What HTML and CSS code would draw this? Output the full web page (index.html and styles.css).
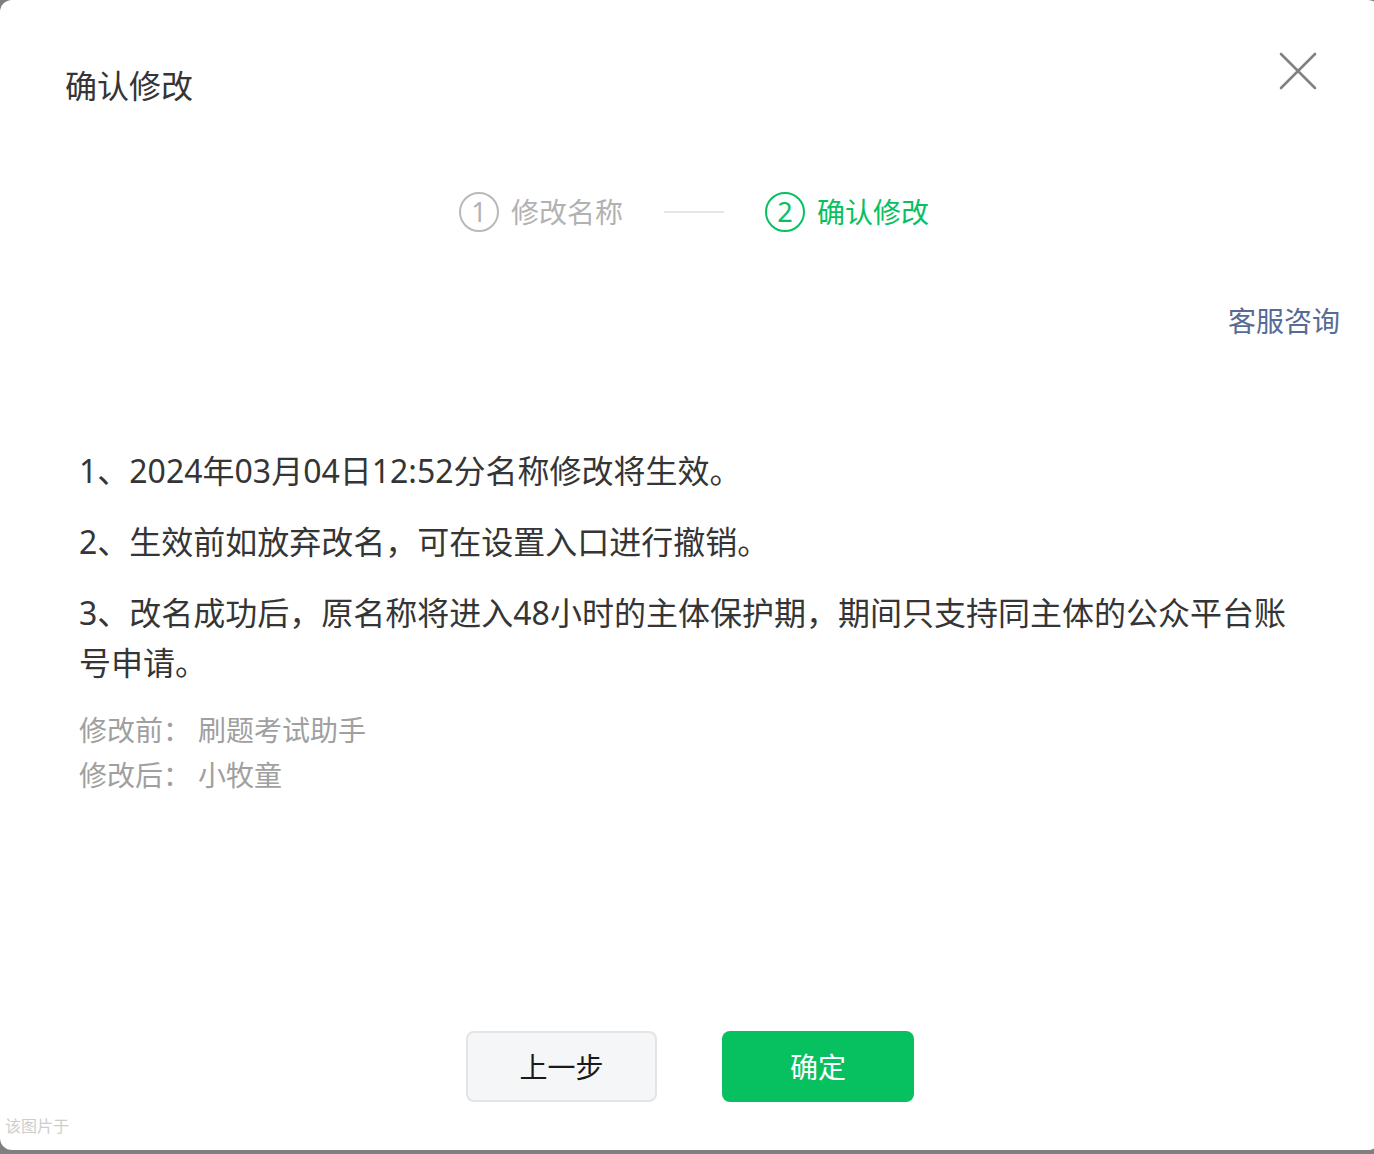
FILE: index.html
```html
<!DOCTYPE html>
<html lang="zh-CN">
<head>
	<meta charset="UTF-8">
	<title>确认修改</title>
	<link rel="stylesheet" href="styles.css">
</head>
<body>
<div class="dialog">
	<div class="hd">
		<h3 class="title">确认修改</h3>
		<a class="close" href="#">
			<svg width="40" height="40" viewBox="0 0 40 40">
				<path d="M3 3L37 37M37 3L3 37" stroke="#818181" stroke-width="2.6" stroke-linecap="round" fill="none"/>
			</svg>
		</a>
	</div>

	<div class="steps">
		<div class="step">
			<span class="num">1</span>
			<span class="name">修改名称</span>
		</div>
		<span class="line"></span>
		<div class="step current">
			<span class="num">2</span>
			<span class="name">确认修改</span>
		</div>
	</div>

	<div class="help"><a href="#">客服咨询</a></div>

	<div class="content">
		<p>1、2024年03月04日12:52分名称修改将生效。</p>
		<p>2、生效前如放弃改名，可在设置入口进行撤销。</p>
		<p>3、改名成功后，原名称将进入48小时的主体保护期，期间只支持同主体的公众平台账号申请。</p>
		<ul class="names">
			<li><span class="label">修改前：</span>刷题考试助手</li>
			<li><span class="label">修改后：</span>小牧童</li>
		</ul>
	</div>

	<div class="ft">
		<a class="btn btn-default" href="#">上一步</a>
		<a class="btn btn-primary" href="#">确定</a>
	</div>

	<span class="mark">该图片于</span>
</div>
</body>
</html>
```

FILE: styles.css
```css
* {
	margin: 0;
	padding: 0;
}

ul {
	list-style: none;
}

a {
	text-decoration: none;
}

html, body {
	height: 100%;
	overflow: hidden;
}

body {
	background: #7f7f7f;
	font-family: "Noto Sans", "Noto Sans CJK SC", sans-serif;
	color: #353535;
}

.dialog {
	width: 1380px;
	height: 1150px;
	background: #fff;
	border-radius: 12px;
	position: relative;
	display: flex;
	flex-direction: column;
}

/* header */
.hd {
	display: flex;
	justify-content: space-between;
	align-items: flex-start;
	padding: 64px 62px 0 65px;
}

.title {
	font-size: 32px;
	line-height: 44px;
	font-weight: normal;
	color: #353535;
}

.close {
	display: block;
	width: 40px;
	height: 40px;
	margin-top: -13px;
}

.close svg {
	display: block;
}

/* steps */
.steps {
	display: flex;
	justify-content: center;
	align-items: center;
	margin-top: 84px;
	padding-left: 8px;
	height: 40px;
}

.step {
	display: flex;
	align-items: center;
	color: #b2b2b2;
}

.step .num {
	width: 36px;
	height: 36px;
	border: 2px solid #b9b9b9;
	border-radius: 50%;
	font-size: 27px;
	line-height: 36px;
	text-align: center;
}

.step .name {
	font-size: 28px;
	line-height: 40px;
	margin-left: 12px;
}

.step.current {
	color: #07c160;
}

.step.current .num {
	border-color: #07c160;
}

.steps .line {
	width: 60px;
	height: 2px;
	background: #e6e6e6;
	margin: 0 41px;
}

/* help link */
.help {
	margin-top: 69px;
	padding-right: 40px;
	text-align: right;
	font-size: 28px;
	line-height: 40px;
}

.help a {
	color: #576b95;
}

/* content */
.content {
	margin-top: 105px;
	padding: 0 80px 0 79px;
}

.content p {
	font-size: 32px;
	line-height: 50px;
	margin-bottom: 21px;
}

.names {
	margin-top: -1px;
	font-size: 28px;
	line-height: 45px;
	color: #a0a0a0;
}

.names .label {
	margin-right: 7px;
}

/* footer */
.ft {
	margin-top: auto;
	padding: 0 0 48px;
	display: flex;
	justify-content: center;
	gap: 65px;
}

.btn {
	display: block;
	width: 192px;
	height: 71px;
	line-height: 72px;
	border-radius: 8px;
	font-size: 28px;
	text-align: center;
	box-sizing: border-box;
}

.btn-default {
	width: 191px;
	background: #f5f6f7;
	border: 2px solid #e3e4e6;
	line-height: 68px;
	color: #191919;
}

.btn-primary {
	background: #07c160;
	color: #fff;
}

.mark {
	position: absolute;
	left: 5px;
	top: 1116px;
	font-size: 16px;
	line-height: 20px;
	color: #cdcdcd;
}
```
